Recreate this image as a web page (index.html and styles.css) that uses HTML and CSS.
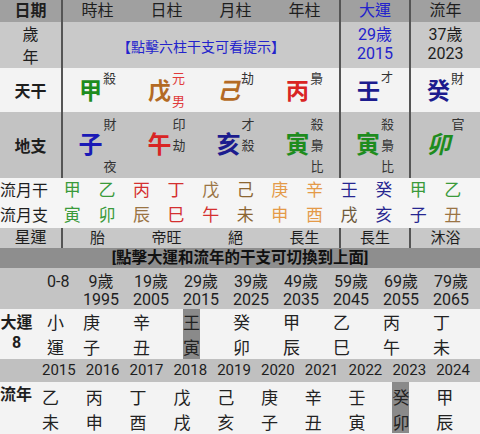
FILE: index.html
```html
<!DOCTYPE html>
<html lang="zh-Hant">
<head>
<meta charset="utf-8">
<link rel="stylesheet" href="styles.css">
</head>
<body>
<div class="grid head">
  <div class="lab b">日期</div>
  <div>時柱</div><div>日柱</div><div>月柱</div><div>年柱</div>
  <div class="dy blue">大運</div>
  <div class="ln">流年</div>
</div>
<div class="grid age">
  <div class="lab two"><span>歲</span><span>年</span></div>
  <div class="span4 blue prompt">【點擊六柱干支可看提示】</div>
  <div class="dy two2 blue"><span>29歲</span><span>2015</span></div>
  <div class="ln two2"><span>37歲</span><span>2023</span></div>
</div>
<div class="grid gan">
  <div class="lab b">天干</div>
  <div><span class="big wood">甲</span><span class="ann a2"><i>殺</i><i></i></span></div>
  <div><span class="big earth">戊</span><span class="ann a2 red"><i>元</i><i>男</i></span></div>
  <div><span class="big earth it">己</span><span class="ann a2"><i>劫</i><i></i></span></div>
  <div><span class="big fire">丙</span><span class="ann a2"><i>梟</i><i></i></span></div>
  <div class="dy"><span class="big water">壬</span><span class="ann a2"><i class="sm">才</i><i></i></span></div>
  <div class="ln"><span class="big water">癸</span><span class="ann a2"><i>財</i><i></i></span></div>
</div>
<div class="grid zhi">
  <div class="lab b">地支</div>
  <div><span class="big water2">子</span><span class="ann a3"><i>財</i><i></i><i>夜</i></span></div>
  <div><span class="big fire">午</span><span class="ann a3"><i>印</i><i>劫</i><i></i></span></div>
  <div><span class="big water">亥</span><span class="ann a3"><i>才</i><i>殺</i><i></i></span></div>
  <div><span class="big wood">寅</span><span class="ann a3"><i>殺</i><i>梟</i><i>比</i></span></div>
  <div class="dy"><span class="big wood">寅</span><span class="ann a3"><i>殺</i><i>梟</i><i>比</i></span></div>
  <div class="ln"><span class="big wood it">卯</span><span class="ann a3"><i>官</i><i></i><i></i></span></div>
</div>
<div class="month">
  <div class="mlab">流月干</div>
  <span class="g1">甲</span><span class="g1">乙</span><span class="r1">丙</span><span class="r1">丁</span><span class="e1">戊</span><span class="e2">己</span><span class="o1">庚</span><span class="o1">辛</span><span class="n1">壬</span><span class="n1">癸</span><span class="g1">甲</span><span class="g1">乙</span>
</div>
<div class="month">
  <div class="mlab">流月支</div>
  <span class="g1">寅</span><span class="g1">卯</span><span class="e1">辰</span><span class="r1">巳</span><span class="r1">午</span><span class="e2">未</span><span class="o1">申</span><span class="o1">酉</span><span class="e3">戌</span><span class="n1">亥</span><span class="n1">子</span><span class="e1">丑</span>
</div>
<div class="grid star">
  <div class="lab">星運</div>
  <div>胎</div><div>帝旺</div><div>絕</div><div>長生</div>
  <div class="dy">長生</div>
  <div class="ln">沐浴</div>
</div>
<div class="band">[點擊大運和流年的干支可切換到上面]</div>
<div class="dyrow ages">
  <div class="side"></div>
  <div class="col c0"><div class="ay"><div>0-8</div><div>&nbsp;</div></div></div>
  <div class="col"><div class="ay"><div>9歲</div><div>1995</div></div></div>
  <div class="col"><div class="ay"><div>19歲</div><div>2005</div></div></div>
  <div class="col"><div class="ay"><div>29歲</div><div>2015</div></div></div>
  <div class="col"><div class="ay"><div>39歲</div><div>2025</div></div></div>
  <div class="col"><div class="ay"><div>49歲</div><div>2035</div></div></div>
  <div class="col"><div class="ay"><div>59歲</div><div>2045</div></div></div>
  <div class="col"><div class="ay"><div>69歲</div><div>2055</div></div></div>
  <div class="col"><div class="ay"><div>79歲</div><div>2065</div></div></div>
</div>
<div class="dyrow dychars">
  <div class="dylab"><div>大運</div><div>8</div></div>
  <div class="col c0"><div class="gz">小<br>運</div></div>
  <div class="col"><div class="gz">庚<br>子</div></div>
  <div class="col"><div class="gz">辛<br>丑</div></div>
  <div class="col"><div class="gz hl">王<br>寅</div></div>
  <div class="col"><div class="gz">癸<br>卯</div></div>
  <div class="col"><div class="gz">甲<br>辰</div></div>
  <div class="col"><div class="gz">乙<br>巳</div></div>
  <div class="col"><div class="gz">丙<br>午</div></div>
  <div class="col"><div class="gz">丁<br>未</div></div>
</div>
<div class="lnrow years">
  <div class="side2"></div>
  <div class="yc">2015</div><div class="yc">2016</div><div class="yc">2017</div><div class="yc">2018</div><div class="yc">2019</div><div class="yc">2020</div><div class="yc">2021</div><div class="yc">2022</div><div class="yc">2023</div><div class="yc">2024</div>
</div>
<div class="lnrow lnchars">
  <div class="side2 lnlab">流年</div>
  <div class="yc"><div class="gz">乙<br>未</div></div>
  <div class="yc"><div class="gz">丙<br>申</div></div>
  <div class="yc"><div class="gz">丁<br>酉</div></div>
  <div class="yc"><div class="gz">戊<br>戌</div></div>
  <div class="yc"><div class="gz">己<br>亥</div></div>
  <div class="yc"><div class="gz">庚<br>子</div></div>
  <div class="yc"><div class="gz">辛<br>丑</div></div>
  <div class="yc"><div class="gz">壬<br>寅</div></div>
  <div class="yc"><div class="gz hl">癸<br>卯</div></div>
  <div class="yc"><div class="gz">甲<br>辰</div></div>
</div>
</body>
</html>
```

FILE: styles.css
```css
* { box-sizing: border-box; margin: 0; padding: 0; }
html, body { width: 480px; height: 434px; overflow: hidden; }
body {
  background: #f3f3f3;
  font-family: Roboto, "Noto Sans CJK TC", sans-serif;
  color: #1e1e1e;
}
i { font-style: normal; }

.grid {
  display: grid;
  grid-template-columns: 63px repeat(4, 69px) 70px 71px;
}
.grid > div {
  display: flex;
  align-items: center;
  justify-content: center;
}
.grid > .lab { border-right: 2px solid #555; }
.grid > .dy, .grid > .ln { border-left: 2px solid #555; }
.b { font-weight: 700; }
.blue { color: #2323cc; }

.head { height: 22px; background: #a0a0a0; font-size: 16px; line-height: 22px; }

.age { height: 46px; background: #c9c9c9; font-size: 16px; }
.grid > .two { flex-direction: column; line-height: 23px; padding-top: 1px; }
.grid > .two2 { flex-direction: column; line-height: 19px; padding-bottom: 4px; }
.grid > .span4 { grid-column: span 4; }
.prompt { font-size: 14px; }

.gan { height: 44px; background: #f3f3f3; }
.zhi { height: 66px; background: #c3c3c3; }
.gan .lab, .zhi .lab { font-size: 16px; }

.big { font-size: 23px; font-weight: 700; line-height: 26px; }
.gan .big { margin-top: 4px; }
.zhi .big { font-size: 24px; }
.it { font-style: italic; }
.ann {
  display: flex;
  flex-direction: column;
  font-size: 13px;
  color: #333;
  margin-left: 1px;
}
.ann i { display: block; height: 1em; }
.a2 { height: 36px; justify-content: space-between; line-height: 13px; }
.a2 i { height: 13px; }
.a3 { line-height: 21px; }
.a3 i { height: 21px; }
.sm { font-size: 12px; }
.red { color: #e03a3a; }

.wood { color: #1e8c1e; }
.fire { color: #d92424; }
.earth { color: #b36a24; }
.water { color: #1c1c8e; }
.water2 { color: #1a1ab6; }

.month {
  display: grid;
  grid-template-columns: 55px repeat(12, 34.6px);
  height: 25px;
  align-items: center;
  background: #f5f5f5;
  font-size: 17px;
  line-height: 25px;
}
.month > span { text-align: center; }
.mlab { font-size: 16px; color: #1e1e1e; white-space: nowrap; }
.g1 { color: #3a9a3a; }
.r1 { color: #d43030; }
.e1 { color: #9a7444; }
.e2 { color: #8c6632; }
.e3 { color: #6e5a3c; }
.o1 { color: #e49a48; }
.n1 { color: #262690; }

.star { height: 20px; background: #c8c8c8; font-size: 15px; line-height: 20px; }
.star .lab { font-size: 16px; }

.band {
  height: 20px;
  background: #8e8e8e;
  text-align: center;
  font-size: 15.5px;
  font-weight: 700;
  line-height: 20px;
  color: #111;
  white-space: nowrap;
}

.dyrow { display: flex; }
.side { width: 47px; flex: none; }
.col { width: 50px; flex: none; display: flex; flex-direction: column; align-items: flex-start; }
.col.c0 { width: 36px; }
.ages { height: 41px; background: #c4c4c4; font-size: 16px; line-height: 18px; padding-top: 5px; }
.ay { text-align: center; white-space: nowrap; }
.dychars { height: 50px; background: #f3f3f3; }
.gz { width: 17px; font-size: 17px; line-height: 25px; padding-top: 2px; height: 50px; color: #222; }
.gz.hl { background: #8a8a8a; }
.dylab {
  width: 33px;
  margin-right: 14px;
  flex: none;
  text-align: center;
  font-size: 16px;
  font-weight: 700;
  line-height: 20px;
  padding-top: 4px;
  white-space: nowrap;
}

.lnrow { display: flex; }
.side2 { width: 42px; flex: none; }
.yc { width: 43.8px; flex: none; }
.years { height: 23px; background: #c0c0c0; font-size: 15px; line-height: 23px; }
.lnchars { height: 51px; background: #f3f3f3; }
.lnchars .gz { padding-top: 4px; height: 51px; }
.lnlab { font-size: 16px; font-weight: 700; line-height: 25px; white-space: nowrap; }
```
